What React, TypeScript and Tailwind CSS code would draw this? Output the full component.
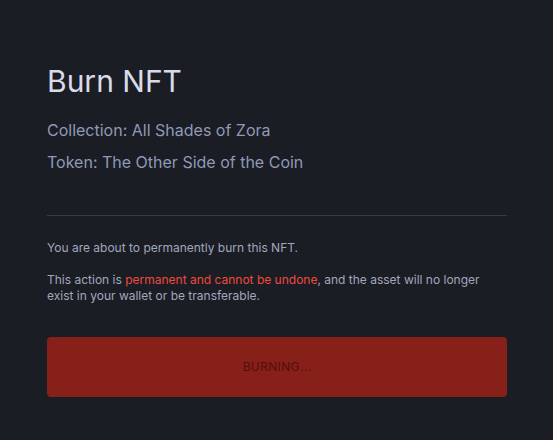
export default function App() {
  return (
    <div
      className="min-h-[440px] w-full bg-[#1b1d25] pl-[47px] pr-[46px] pt-[63px] pb-10"
      style={{ fontFamily: 'Inter, "Noto Sans", sans-serif' }}
    >
      <h1 className="text-[30px] leading-9 font-normal text-[#d9dce8]">Burn NFT</h1>
      <div className="mt-[20px] flex flex-col gap-[10px] text-base text-[#8e9ab6]">
        <p className="leading-[22px]">Collection: All Shades of Zora</p>
        <p className="leading-[22px]">Token: The Other Side of the Coin</p>
      </div>
      <div className="mt-[42px] h-px bg-[#363946]" />
      <p className="mt-[24px] text-xs leading-4 text-[#a0a8bb]">You are about to permanently burn this NFT.</p>
      <p className="mt-[16px] text-xs leading-4 text-[#a0a8bb]">
        This action is <span className="text-[#f04a3c]">permanent and cannot be undone</span>, and the asset will no longer exist in your wallet or be transferable.
      </p>
      <button className="mt-[33px] flex h-[60px] w-full items-center justify-center rounded bg-[#862018] text-xs tracking-[0.03em] text-[#550e0a]">
        BURNING...
      </button>
    </div>
  );
}
